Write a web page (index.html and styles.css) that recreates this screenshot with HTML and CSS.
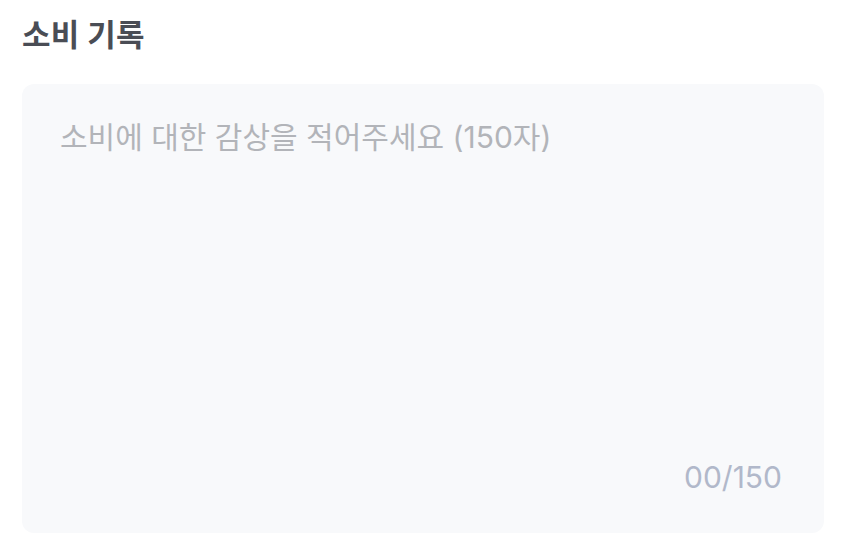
FILE: index.html
```html
<!DOCTYPE html>
<html lang="ko">
<head>
<meta charset="utf-8">
<link rel="stylesheet" href="styles.css">
</head>
<body>
<section class="record">
  <h2 class="record-title">소비 기록</h2>
  <div class="record-box">
    <textarea class="record-input" placeholder="소비에 대한 감상을 적어주세요 (150자)"></textarea>
    <div class="record-count">00/150</div>
  </div>
</section>
</body>
</html>
```
FILE: styles.css
```css
html, body {
  margin: 0;
  padding: 0;
  background: #ffffff;
}
body {
  font-family: Inter, "Noto Sans CJK KR", "Noto Sans", sans-serif;
}
.record {
  padding: 15px 18px 0 22px;
  display: flex;
  flex-direction: column;
  gap: 29px;
}
.record-title {
  margin: 0;
  font-size: 31px;
  line-height: 40px;
  font-weight: 700;
  letter-spacing: 0.3px;
  color: #4a4d55;
}
.record-box {
  height: 449px;
  background: #f8f9fb;
  border-radius: 12px;
  display: flex;
  flex-direction: column;
  padding: 32px 42px 36px 38px;
  box-sizing: border-box;
}
.record-input {
  flex: 1;
  border: none;
  outline: none;
  resize: none;
  background: transparent;
  padding: 0;
  margin: 0;
  font-family: inherit;
  font-size: 30px;
  line-height: 42px;
  color: #333;
}
.record-input::placeholder {
  color: #b2b4b9;
}
.record-count {
  align-self: flex-end;
  font-size: 30px;
  line-height: 40px;
  color: #b1b8ca;
}
```
